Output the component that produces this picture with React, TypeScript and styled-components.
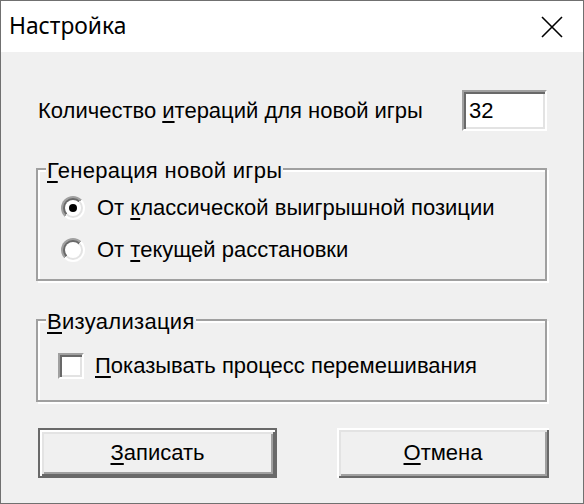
import React from "react";
import styled, { createGlobalStyle } from "styled-components";

const Global = createGlobalStyle`
  html, body { margin: 0; padding: 0; background: #f0f0f0; }
  * { box-sizing: border-box; }
`;

const Window = styled.div`
  width: 584px;
  height: 504px;
  border: 1px solid #707070;
  background: #f0f0f0;
  display: flex;
  flex-direction: column;
  font-family: "Liberation Sans", Arial, sans-serif;
  font-size: 22px;
  color: #000;
`;

const TitleBar = styled.div`
  height: 51px;
  flex: none;
  background: #fff;
  display: flex;
  align-items: center;
  justify-content: space-between;
  padding: 0 20px 0 8px;
`;

const Title = styled.div`
  font-family: "Noto Sans", "Segoe UI", sans-serif;
  font-size: 22.8px;
  line-height: 26px;
  margin-top: -2px;
`;

const CloseIcon = styled.svg`
  width: 22px;
  height: 22px;
  display: block;
`;

const Body = styled.div`
  flex: 1;
  display: flex;
  flex-direction: column;
  padding: 38px 0 0 35px;
`;

const IterRow = styled.div`
  display: flex;
  align-items: center;
  height: 41px;
  margin-left: 2px;
`;

const Label = styled.span`
  line-height: 26px;
  width: 424px;
  white-space: nowrap;
`;

const Mn = styled.u`
  text-decoration: underline;
  text-decoration-thickness: 2px;
  text-underline-offset: 3px;
`;

const NumberInput = styled.div`
  width: 85px;
  height: 41px;
  background: #fff;
  border: 2px solid;
  border-color: #a0a0a0 #fff #fff #a0a0a0;
  box-shadow: inset 2px 2px 0 #696969, inset -2px -2px 0 #e3e3e3;
  padding: 0 0 0 5px;
  display: flex;
  align-items: center;
  line-height: 26px;
`;

const Group = styled.div<{ $mt: number; $h: number; $pt: number; $pl: number }>`
  position: relative;
  width: 511px;
  height: ${(p) => p.$h}px;
  margin-top: ${(p) => p.$mt}px;
  border: 2px solid #a0a0a0;
  box-shadow: inset 2px 2px 0 #fff, 2px 2px 0 #fff;
  padding: ${(p) => p.$pt}px 0 0 ${(p) => p.$pl}px;
  display: flex;
  flex-direction: column;
`;

const Legend = styled.span`
  position: absolute;
  top: -12px;
  left: 8px;
  padding: 0 1px;
  background: #f0f0f0;
  line-height: 26px;
  white-space: nowrap;
  letter-spacing: 0.3px;
`;

const OptionRow = styled.div<{ $gap: number }>`
  height: 42px;
  display: flex;
  align-items: center;
  gap: ${(p) => p.$gap}px;
  line-height: 26px;
  white-space: nowrap;
`;

const RadioOuter = styled.span`
  width: 24px;
  height: 24px;
  border-radius: 50%;
  padding: 2px;
  background: linear-gradient(135deg, #a0a0a0 50%, #fff 50%);
  flex: none;
`;

const RadioInner = styled.span`
  display: block;
  width: 20px;
  height: 20px;
  border-radius: 50%;
  padding: 2px;
  background: linear-gradient(135deg, #696969 50%, #e3e3e3 50%);
`;

const RadioFace = styled.span<{ $on: boolean }>`
  width: 16px;
  height: 16px;
  border-radius: 50%;
  background: #fff;
  display: flex;
  align-items: center;
  justify-content: center;
  &::after {
    content: "";
    width: 8px;
    height: 8px;
    border-radius: 50%;
    background: ${(p) => (p.$on ? "#000" : "transparent")};
  }
`;

const CheckBox = styled.span`
  width: 26px;
  height: 26px;
  flex: none;
  background: #fff;
  border: 2px solid;
  border-color: #a0a0a0 #fff #fff #a0a0a0;
  box-shadow: inset 2px 2px 0 #696969, inset -2px -2px 0 #e3e3e3;
`;

const ButtonRow = styled.div`
  display: flex;
  margin-top: 26px;
  margin-left: 2px;
  gap: 60px;
`;

const Button = styled.div<{ $w: number; $def?: boolean }>`
  width: ${(p) => p.$w}px;
  height: 50px;
  background: #f0f0f0;
  border: ${(p) => (p.$def ? "2px solid #696969" : "none")};
  box-shadow: inset 2px 2px 0 #fff, inset -2px -2px 0 #696969,
    inset 4px 4px 0 #e3e3e3, inset -4px -4px 0 #a0a0a0;
  display: flex;
  align-items: center;
  justify-content: center;
  line-height: 26px;
`;

const Radio = ({ on }: { on: boolean }) => (
  <RadioOuter>
    <RadioInner>
      <RadioFace $on={on} />
    </RadioInner>
  </RadioOuter>
);

export default function App() {
  return (
    <>
      <Global />
      <Window>
        <TitleBar>
          <Title>Настройка</Title>
          <CloseIcon viewBox="0 0 22 22">
            <path d="M1 1 L21 21 M21 1 L1 21" stroke="#000" strokeWidth="1.6" fill="none" />
          </CloseIcon>
        </TitleBar>
        <Body>
          <IterRow>
            <Label>
              Количество <Mn>и</Mn>тераций для новой игры
            </Label>
            <NumberInput>32</NumberInput>
          </IterRow>

          <Group $mt={37} $h={113} $pt={17} $pl={23}>
            <Legend>
              <Mn>Г</Mn>енерация новой игры
            </Legend>
            <OptionRow $gap={12}>
              <Radio on />
              <span>
                От <Mn>к</Mn>лассической выигрышной позиции
              </span>
            </OptionRow>
            <OptionRow $gap={12}>
              <Radio on={false} />
              <span>
                От <Mn>т</Mn>екущей расстановки
              </span>
            </OptionRow>
          </Group>

          <Group $mt={38} $h={83} $pt={24} $pl={20}>
            <Legend>
              <Mn>В</Mn>изуализация
            </Legend>
            <OptionRow $gap={11}>
              <CheckBox />
              <span>
                <Mn>П</Mn>оказывать процесс перемешивания
              </span>
            </OptionRow>
          </Group>

          <ButtonRow>
            <Button $w={239} $def>
              <span>
                <Mn>З</Mn>аписать
              </span>
            </Button>
            <Button $w={212}>
              <span>
                <Mn>О</Mn>тмена
              </span>
            </Button>
          </ButtonRow>
        </Body>
      </Window>
    </>
  );
}
